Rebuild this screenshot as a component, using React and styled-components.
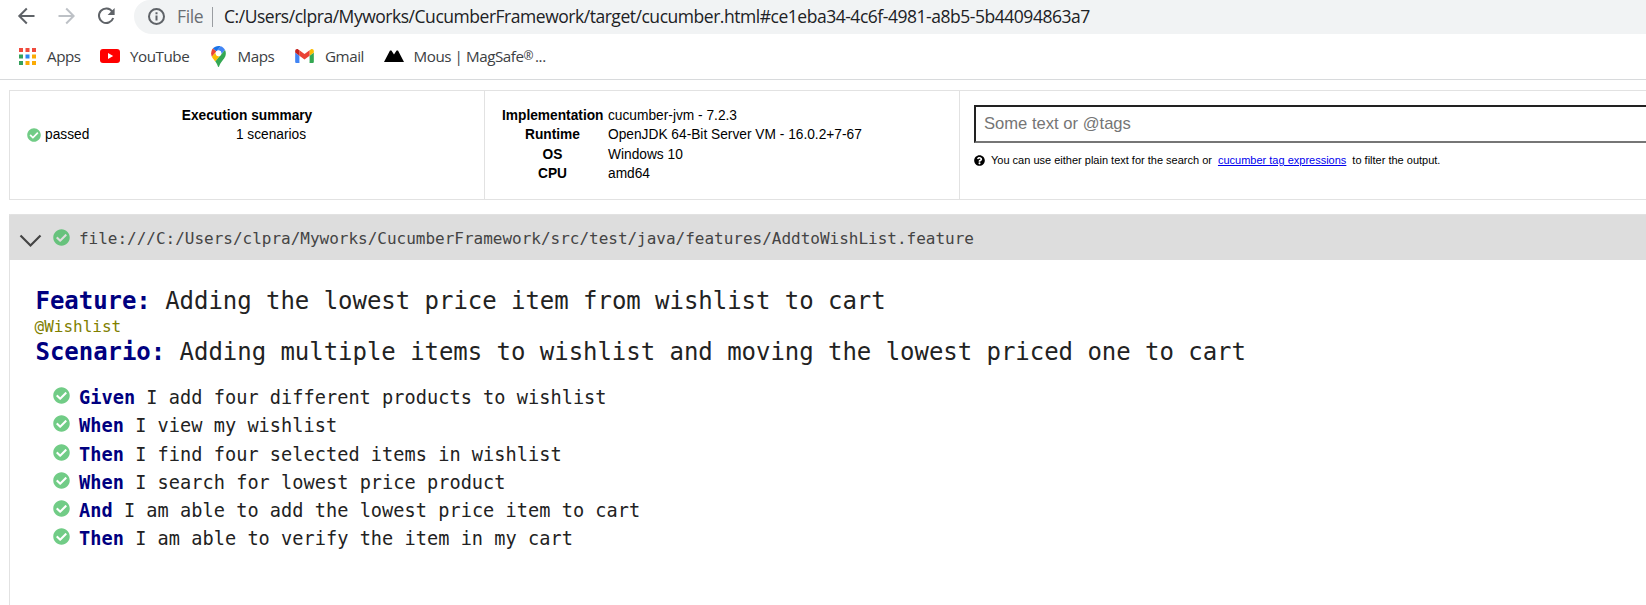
import React from 'react';
import styled, { createGlobalStyle } from 'styled-components';
import { FaCheckCircle, FaQuestionCircle } from 'react-icons/fa';

const Global = createGlobalStyle`
  * { box-sizing: border-box; }
  html, body { margin: 0; padding: 0; background: #fff; overflow: hidden; }
  body { font-family: "Liberation Sans", Arial, sans-serif; color: #000; }
`;

const Page = styled.div`
  width: 100vw;
  height: 100vh;
  display: flex;
  flex-direction: column;
  overflow: hidden;
`;

const Toolbar = styled.div`
  flex: none;
  height: 34px;
  display: flex;
  padding-left: 17px;
  font-family: "Open Sans", "Noto Sans", sans-serif;
`;

const NavIcon = styled.svg`
  flex: none;
  width: 18px;
  height: 18px;
  margin: 7px 22px 0 0;
  fill: none;
  stroke: ${(p) => p.$color || '#5f6368'};
  stroke-width: 2;
`;

const AddressBar = styled.div`
  flex: 1;
  height: 34px;
  margin-left: -3px;
  padding: 0 0 2px 14px;
  display: flex;
  align-items: center;
  background: #f1f3f4;
  border-bottom-left-radius: 18px;
  border-top-left-radius: 16px;
  white-space: nowrap;
`;

const InfoIcon = styled.svg`
  width: 17px;
  height: 17px;
  margin-right: 12px;
  fill: none;
  stroke: #5f6368;
  stroke-width: 2;
`;

const Scheme = styled.span`
  width: 35px;
  font-size: 17.5px;
  letter-spacing: -0.4px;
  color: #6a6e73;
`;

const Divider = styled.span`
  width: 1px;
  height: 20px;
  margin: 2px 11px 0 0;
  background: #9a9da1;
`;

const Url = styled.span`
  font-size: 17.5px;
  letter-spacing: -0.47px;
  color: #202124;
`;

const Bookmarks = styled.div`
  flex: none;
  height: 46px;
  display: flex;
  padding: 0 0 1px 18.5px;
  border-bottom: 1px solid #d8dadc;
  font-family: "Open Sans", "Noto Sans", sans-serif;
  font-size: 15.2px;
  color: #3c4043;
`;

const Bookmark = styled.div`
  flex: none;
  width: ${(p) => p.$w}px;
  display: flex;
  align-items: center;
  gap: ${(p) => p.$gap}px;
  letter-spacing: -0.45px;
  white-space: nowrap;
  svg { flex: none; }
`;

const Registered = styled.span`
  font-size: 12px;
  vertical-align: 2px;
  margin-right: 2px;
`;

const Report = styled.main`
  flex: 1;
  padding: 10px 0 0 9px;
  display: flex;
  flex-direction: column;
`;

const Summary = styled.section`
  flex: none;
  height: 110px;
  display: grid;
  grid-template-columns: 475px 475px 1fr;
  border: 1px solid #e2e2e2;
  border-right: 0;
  font-size: 13.74px;
  line-height: 19.6px;
`;

const Cell = styled.div`
  padding: ${(p) => p.$pad};
  border-right: 1px solid #e2e2e2;
  &:last-child { border-right: 0; }
`;

const CellTitle = styled.div`
  font-weight: bold;
  text-align: center;
`;

const Result = styled.div`
  display: grid;
  grid-template-columns: 48px 1fr;
`;

const Status = styled.span`
  display: flex;
  align-items: center;
  gap: 4px;
`;

const Scenarios = styled.span`
  text-align: center;
`;

const Facts = styled.dl`
  margin: 0;
  display: grid;
  grid-template-columns: 101px 1fr;
  column-gap: 5px;
  dt { font-weight: bold; text-align: center; white-space: nowrap; }
  dd { margin: 0; }
`;

const SearchInput = styled.input`
  display: block;
  width: 700px;
  height: 38px;
  padding: 0 8px 1px;
  border: 2px solid;
  border-color: #222 #767676 #767676 #222;
  font: 16.6px "Liberation Sans", Arial, sans-serif;
  background: #fff;
  outline: 0;
  &::placeholder { color: #757575; opacity: 1; }
`;

const Hint = styled.p`
  margin: 11px 0 0;
  display: flex;
  align-items: center;
  gap: 6px;
  font-size: 11px;
  line-height: 13px;
  white-space: nowrap;
  a { color: #0000ee; }
`;

const Feature = styled.section`
  flex: 1;
  margin-top: 14px;
  border-left: 1px solid #e2e2e2;
  font-family: "DejaVu Sans Mono", Consolas, monospace;
  color: #222;
`;

const FeatureBar = styled.header`
  height: 46px;
  margin-left: -1px;
  padding-left: 10px;
  display: flex;
  align-items: center;
  border-top: 1px solid #e2e2e2;
  border-top-left-radius: 2px;
  background: #ddd;
  font-size: 16px;
  color: #444;
`;

const Chevron = styled.svg`
  width: 23px;
  height: 14px;
  margin: 7px 11px 0 0;
  fill: none;
  stroke: #444;
  stroke-width: 2.2;
`;

const Passed = styled(FaCheckCircle)`
  flex: none;
  width: ${(p) => p.$size}px;
  height: ${(p) => p.$size}px;
  color: ${(p) => p.$tone || '#71cc86'};
`;

const Path = styled.span`
  margin: 1px 0 0 9px;
  letter-spacing: -0.01px;
`;

const Body = styled.div`
  padding: 27px 0 0 25.5px;
`;

const Heading = styled.h1`
  margin: 0;
  font-size: 24px;
  line-height: 28px;
  letter-spacing: -0.04px;
  font-weight: normal;
  white-space: nowrap;
`;

const Keyword = styled.span`
  font-weight: bold;
  color: #000080;
`;

const Tag = styled.div`
  font-size: 16px;
  line-height: 23px;
  margin-left: -1px;
  color: #808000;
`;

const Steps = styled.ol`
  margin: 17.6px 0 0;
  padding: 0 0 0 17.5px;
  list-style: none;
`;

const Step = styled.li`
  height: 28.2px;
  display: flex;
  align-items: center;
  gap: 9px;
  font-size: 18.6px;
  letter-spacing: 0.03px;
  white-space: pre;
  svg { margin-bottom: 4px; }
`;

const steps = [
  ['Given', 'I add four different products to wishlist'],
  ['When', 'I view my wishlist'],
  ['Then', 'I find four selected items in wishlist'],
  ['When', 'I search for lowest price product'],
  ['And', 'I am able to add the lowest price item to cart'],
  ['Then', 'I am able to verify the item in my cart'],
];

const facts = [
  ['Implementation', 'cucumber-jvm - 7.2.3'],
  ['Runtime', 'OpenJDK 64-Bit Server VM - 16.0.2+7-67'],
  ['OS', 'Windows 10'],
  ['CPU', 'amd64'],
];

const appColors = ['#f04a3c', '#f04a3c', '#f04a3c', '#34a05c', '#2a86f0', '#fbab04', '#34a05c', '#fbab04', '#fbab04'];

const AppsIcon = () => (
  <svg width="17" height="17" viewBox="0 0 17 17">
    {appColors.map((c, i) => (
      <rect key={i} x={(i % 3) * 6.5} y={Math.floor(i / 3) * 6.5} width="4" height="4" fill={c} />
    ))}
  </svg>
);

const YouTubeIcon = () => (
  <svg width="20" height="14" viewBox="0 0 20 14">
    <rect width="20" height="14" rx="3" fill="#f00" />
    <path d="M8 4l5.2 3L8 10z" fill="#fff" />
  </svg>
);

const MapsIcon = () => (
  <svg width="15" height="21" viewBox="0 0 92.3 132.3">
    <path fill="#1a73e8" d="M60.2 2.2C55.8.8 51 0 46.1 0 32 0 19.3 6.4 10.8 16.5l21.8 18.3z" />
    <path fill="#ea4335" d="M10.8 16.5C4.1 24.5 0 34.9 0 46.1c0 8.7 1.7 15.7 4.6 22l28-33.3z" />
    <path fill="#4285f4" d="M46.2 28.5c9.8 0 17.7 7.9 17.7 17.7 0 4.3-1.6 8.3-4.2 11.4 0 0 13.9-16.6 27.5-32.7-5.6-10.8-15.3-19-27-22.7L32.6 34.8c3.3-3.8 8.1-6.3 13.6-6.3" />
    <path fill="#fbbc04" d="M46.2 63.8c-9.8 0-17.7-7.9-17.7-17.7 0-4.3 1.5-8.3 4.1-11.3l-28 33.3c4.8 10.6 12.8 19.2 21 29.9l34.1-40.5c-3.3 3.9-8.1 6.3-13.5 6.3" />
    <path fill="#34a853" d="M59.1 109.2c15.4-24.1 33.3-35 33.3-63 0-7.7-1.9-14.9-5.2-21.3L25.6 98c2.6 3.4 5.3 7.3 7.9 11.3 9.4 14.5 6.8 23.1 12.8 23.1s3.4-8.7 12.8-23.2" />
    <circle cx="46.2" cy="46.2" r="17.7" fill="#fff" />
  </svg>
);

const GmailIcon = () => (
  <svg width="19" height="14" viewBox="52 42 88 66">
    <path fill="#4285f4" d="M58 108h14V74L52 59v43c0 3.32 2.69 6 6 6" />
    <path fill="#34a853" d="M120 108h14c3.32 0 6-2.69 6-6V59l-20 15" />
    <path fill="#fbbc04" d="M120 48v26l20-15v-8c0-7.42-8.47-11.65-14.4-7.2" />
    <path fill="#ea4335" d="M72 74V48l24 18 24-18v26L96 92" />
    <path fill="#c5221f" d="M52 51v8l20 15V48l-5.6-4.2c-5.94-4.45-14.4-.22-14.4 7.2" />
  </svg>
);

const MousIcon = () => (
  <svg width="20" height="12" viewBox="0 0 20 12">
    <path d="M0 12L6 .5h1.4L10 4.6 12.6.5H14L20 12z" fill="#000" />
  </svg>
);

export default function App() {
  return (
    <Page>
      <Global />
      <Toolbar>
        <NavIcon viewBox="0 0 18 18"><path d="M17.5 9H2.5M9.8 1.5L2.3 9l7.5 7.5" /></NavIcon>
        <NavIcon viewBox="0 0 18 18" $color="#bdc1c6"><path d="M1.5 9h15M9.2 1.5L16.7 9l-7.5 7.5" /></NavIcon>
        <NavIcon viewBox="0 0 18 18">
          <path d="M15.3 4.6A7.3 7.3 0 1 0 16.2 11" />
          <path d="M17.6 1v7h-7z" fill="#5f6368" stroke="none" />
        </NavIcon>
        <AddressBar>
          <InfoIcon viewBox="0 0 17 17">
            <circle cx="8.5" cy="8.5" r="7.5" />
            <path d="M8.5 7.5v5M8.5 4.2v2" />
          </InfoIcon>
          <Scheme>File</Scheme>
          <Divider />
          <Url>C:/Users/clpra/Myworks/CucumberFramework/target/cucumber.html#ce1eba34-4c6f-4981-a8b5-5b44094863a7</Url>
        </AddressBar>
      </Toolbar>
      <Bookmarks>
        <Bookmark $w={81.5} $gap={11.5}><AppsIcon />Apps</Bookmark>
        <Bookmark $w={110.5} $gap={10}><YouTubeIcon />YouTube</Bookmark>
        <Bookmark $w={84.5} $gap={12}><MapsIcon />Maps</Bookmark>
        <Bookmark $w={88.5} $gap={11}><GmailIcon />Gmail</Bookmark>
        <Bookmark $w={170} $gap={10}><MousIcon /><span>Mous | MagSafe<Registered>®</Registered>...</span></Bookmark>
      </Bookmarks>
      <Report>
        <Summary>
          <Cell $pad="14.6px 17px">
            <CellTitle>Execution summary</CellTitle>
            <Result>
              <Status><Passed $size={14} />passed</Status>
              <Scenarios>1 scenarios</Scenarios>
            </Result>
          </Cell>
          <Cell $pad="14.6px 17px">
            <Facts>
              {facts.map(([k, v]) => (
                <React.Fragment key={k}><dt>{k}</dt><dd>{v}</dd></React.Fragment>
              ))}
            </Facts>
          </Cell>
          <Cell $pad="14px 0 0 14px">
            <SearchInput placeholder="Some text or @tags" />
            <Hint>
              <FaQuestionCircle size={11} />
              <span>You can use either plain text for the search or</span>
              <a href="#tags">cucumber tag expressions</a>
              <span>to filter the output.</span>
            </Hint>
          </Cell>
        </Summary>
        <Feature>
          <FeatureBar>
            <Chevron viewBox="0 0 23 14"><path d="M1.5 1.5l10 10 10-10" /></Chevron>
            <Passed $size={17} $tone="#67c27c" />
            <Path>file:///C:/Users/clpra/Myworks/CucumberFramework/src/test/java/features/AddtoWishList.feature</Path>
          </FeatureBar>
          <Body>
            <Heading><Keyword>Feature:</Keyword> Adding the lowest price item from wishlist to cart</Heading>
            <Tag>@Wishlist</Tag>
            <Heading as="h2"><Keyword>Scenario:</Keyword> Adding multiple items to wishlist and moving the lowest priced one to cart</Heading>
            <Steps>
              {steps.map(([k, t], i) => (
                <Step key={i}>
                  <Passed $size={17} />
                  <span><Keyword>{k}</Keyword> {t}</span>
                </Step>
              ))}
            </Steps>
          </Body>
        </Feature>
      </Report>
    </Page>
  );
}
